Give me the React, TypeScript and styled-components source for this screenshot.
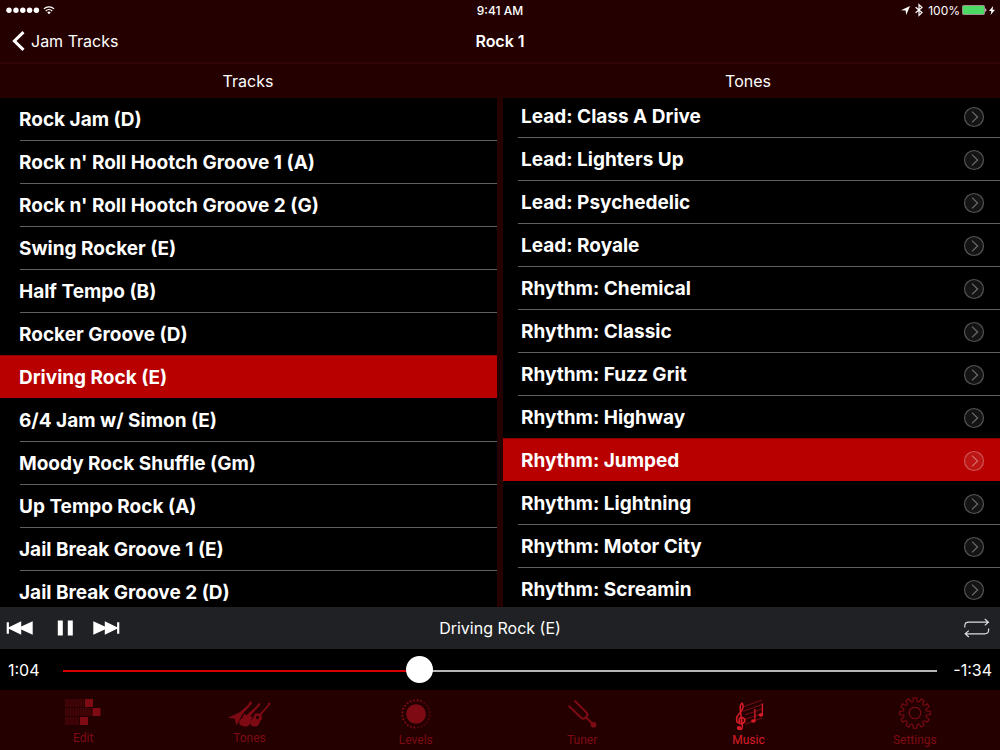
import React, { useState } from "react";
import styled, { createGlobalStyle } from "styled-components";

const Global = createGlobalStyle`
  *, *::before, *::after { box-sizing: border-box; }
  body { margin: 0; background: #000; }
  button { font: inherit; color: inherit; background: none; border: 0; padding: 0; cursor: pointer; }
  svg { display: block; flex: none; overflow: visible; }
`;

const Page = styled.div`
  display: flex;
  flex-direction: column;
  height: 100vh;
  min-height: 420px;
  color: #fff;
  background: #000;
  font-family: Inter, "Liberation Sans", sans-serif;
  font-size: 16px;
`;

const Header = styled.header`
  flex: none;
  background: #250000;
`;

const Split = styled.div`
  display: grid;
  grid-template-columns: 1fr auto 1fr;
  align-items: center;
`;

const StatusBar = styled(Split)`
  height: 20px;
  padding: 0 5px;
  font-size: 12px;
`;

const Cluster = styled.div<{ $end?: boolean; $gap: number }>`
  display: flex;
  align-items: center;
  justify-content: ${(p) => (p.$end ? "flex-end" : "flex-start")};
  gap: ${(p) => p.$gap}px;
`;

const Clock = styled.time`
  font-weight: 500;
`;

const NavBar = styled(Split)`
  height: 44px;
  padding: 0 12px;
  border-bottom: 2px solid #320606;
`;

const BackLink = styled.a`
  display: flex;
  align-items: center;
  gap: 6px;
  color: #fff;
  text-decoration: none;
`;

const Title = styled.h1`
  margin: 0;
  font-size: 16px;
  font-weight: 600;
`;

const Headings = styled.div`
  display: grid;
  grid-template-columns: 1fr 1fr;
  column-gap: 4px;
  height: 34px;
  padding-right: 4px;
  align-items: center;
  text-align: center;
`;

const Heading = styled.h2`
  margin: 0;
  font-size: 16px;
  font-weight: 400;
`;

const Columns = styled.main`
  flex: 1;
  min-height: 0;
  display: grid;
  grid-template-columns: 1fr 1fr;
  column-gap: 6px;
  background: #250000;
`;

const Pane = styled.div`
  overflow: hidden;
  background: #000;
`;

const List = styled.ul<{ $scrolled: number }>`
  list-style: none;
  margin: -${(p) => p.$scrolled}px 0 0;
  padding: 0;
`;

const Row = styled.button<{ $selected: boolean; $line: string; $inset: number; $lineInset: number }>`
  display: flex;
  align-items: center;
  justify-content: space-between;
  width: 100%;
  height: 43px;
  padding: 2px 15px 0 ${(p) => p.$inset}px;
  text-align: left;
  font-size: 19px;
  line-height: 23px;
  font-weight: 700;
  background: linear-gradient(${(p) => p.$line}, ${(p) => p.$line})
    ${(p) => (p.$selected ? 0 : p.$lineInset)}px 0 / 100% 1px no-repeat
    ${(p) => (p.$selected ? "#b80000" : "#000")};
`;

const Player = styled.section`
  flex: none;
  display: grid;
  grid-template-columns: 1fr auto 1fr;
  align-items: center;
  height: 42px;
  padding: 0 10px 0 6px;
  background: #202124;
`;

const IconButton = styled.button`
  display: flex;
`;

const Transport = styled.div`
  display: flex;
  align-items: center;
  gap: 20px;
`;

const NowPlaying = styled.span`
  padding-left: 4px;
`;

const LoopSlot = styled.div`
  display: flex;
  justify-content: flex-end;
`;

const Progress = styled.div`
  flex: none;
  display: flex;
  align-items: center;
  height: 41px;
  padding: 0 8px;
`;

const Time = styled.span<{ $end?: boolean }>`
  width: 55px;
  text-align: ${(p) => (p.$end ? "right" : "left")};
`;

const Seek = styled.input`
  flex: 1;
  min-width: 0;
  height: 27px;
  margin: 0;
  appearance: none;
  background: linear-gradient(90deg, #d80000 var(--played), #b4b4b4 var(--played)) 0 14px / 100% 2px no-repeat;
  &::-webkit-slider-thumb {
    appearance: none;
    width: 27px;
    height: 27px;
    border-radius: 50%;
    background: #fff;
  }
`;

const TabBar = styled.nav`
  flex: none;
  display: grid;
  grid-template-columns: repeat(6, 1fr);
  height: 60px;
  padding-right: 2px;
  background: #250000;
`;

const Tab = styled.a<{ $active: boolean }>`
  display: flex;
  flex-direction: column;
  align-items: center;
  gap: 6px;
  padding-top: 6px;
  color: ${(p) => (p.$active ? "#d91c28" : "#7e0b14")};
  text-decoration: none;
  font-family: Roboto, "Liberation Sans", sans-serif;
  font-size: 12px;
  line-height: 14px;
`;

const tracks = [
  "Rock Jam (D)",
  "Rock n' Roll Hootch Groove 1 (A)",
  "Rock n' Roll Hootch Groove 2 (G)",
  "Swing Rocker (E)",
  "Half Tempo (B)",
  "Rocker Groove (D)",
  "Driving Rock (E)",
  "6/4 Jam w/ Simon (E)",
  "Moody Rock Shuffle (Gm)",
  "Up Tempo Rock (A)",
  "Jail Break Groove 1 (E)",
  "Jail Break Groove 2 (D)",
];

const tones = [
  "Lead: Class A Drive",
  "Lead: Lighters Up",
  "Lead: Psychedelic",
  "Lead: Royale",
  "Rhythm: Chemical",
  "Rhythm: Classic",
  "Rhythm: Fuzz Grit",
  "Rhythm: Highway",
  "Rhythm: Jumped",
  "Rhythm: Lightning",
  "Rhythm: Motor City",
  "Rhythm: Screamin",
];

const Disclosure = () => (
  <svg width="22" height="22" viewBox="0 0 22 22" fill="none" stroke="#fff" aria-hidden="true">
    <circle cx="11" cy="11" r="9.5" fill="#fff" fillOpacity="0.08" strokeOpacity="0.3" strokeWidth="1.2" />
    <path d="M9 5.6 14.6 11 9 16.4" strokeOpacity="0.36" strokeWidth="1.3" />
  </svg>
);

const Signal = () => (
  <svg width="34" height="8" viewBox="0 0 34 8" fill="#fff" aria-hidden="true">
    {[4, 11, 17.8, 24.6, 31.4].map((x) => (
      <circle key={x} cx={x} cy="4.3" r="2.7" />
    ))}
  </svg>
);

const Wifi = () => (
  <svg width="12" height="10" viewBox="0 0 13 10" fill="none" stroke="#fff" strokeWidth="1.4" aria-hidden="true">
    <path d="M1 3.8a7.8 7.8 0 0 1 11 0M3 6a5 5 0 0 1 7 0" />
    <path d="M4.6 7.6a2.7 2.7 0 0 1 3.8 0L6.5 9.6Z" fill="#fff" stroke="none" />
  </svg>
);

const Location = () => (
  <svg width="9" height="9" viewBox="0 0 9 9" fill="#fff" aria-hidden="true">
    <path d="M9 0 5.2 9 4.6 4.5 0 4.2Z" />
  </svg>
);

const Bluetooth = () => (
  <svg width="8" height="12" viewBox="0 0 8 12" fill="none" stroke="#fff" strokeWidth="1.2" aria-hidden="true">
    <path d="M.6 3.2 7 8.6 4 11.3V.7L7 3.4.6 8.8" />
  </svg>
);

const Battery = () => (
  <svg width="25" height="10" viewBox="0 0 25 10" aria-hidden="true">
    <rect x=".5" y=".5" width="22" height="9" rx="1" fill="#4cd964" stroke="#a08f8f" />
    <path d="M23.2 3.2c1.6.3 1.6 3.3 0 3.6Z" fill="#e0d8d8" />
  </svg>
);

const Bolt = () => (
  <svg width="6" height="9" viewBox="0 0 6 9" fill="#fff" aria-hidden="true">
    <path d="M4.2 0 0 5H2.4L1.6 9 6 3.8H3.5Z" />
  </svg>
);

const Chevron = () => (
  <svg width="13" height="20" viewBox="0 0 13 20" fill="none" stroke="#fff" strokeWidth="3" aria-hidden="true">
    <path d="M11.5 1.2 2.4 10l9.1 8.8" />
  </svg>
);

const Skip = ({ forward }: { forward?: boolean }) => (
  <svg width="27" height="14" viewBox="0 0 27 14" fill="#fff" aria-hidden="true">
    <g transform={forward ? "matrix(-1 0 0 1 27 0)" : undefined}>
      <path d="M.7 1.2h2.2v5.1L15.2.2v5.4L26.7.2v13.6L15.2 8.4v5.4L2.9 7.7v5.1H.7Z" />
    </g>
  </svg>
);

const Pause = () => (
  <svg width="20" height="16" viewBox="-4 0 20 16" fill="#fff" aria-hidden="true">
    <path d="M.8.5h5v15h-5ZM10.8.5h5v15h-5Z" />
  </svg>
);

const Loop = () => (
  <svg width="26" height="20" viewBox="0 0 26 20" fill="none" stroke="#ddd" strokeWidth="1.2" aria-hidden="true">
    <path d="M.8 9.5V8q0-3.8 4-3.8H24M20.8 1l3.6 3.2-3.6 3.2" />
    <path d="M24.6 10.5V12q0 3.8-4 3.8H2M4.8 12.6 1.2 15.8 4.8 19" />
  </svg>
);

const EditIcon = () => (
  <svg width="36" height="29" viewBox="0 0 36 29" fill="currentColor" aria-hidden="true">
    {[
      [3, 20],
      [12, 27.5],
      [21, 15],
    ].map(([y, end]) => (
      <g key={y}>
        <rect x="0" y={y} width={end - 1} height="8" fillOpacity="0.34" />
        {Array.from({ length: Math.floor(end / 2.5) }, (_, i) => (
          <rect key={i} x={i * 2.5 + 1.6} y={y} width="0.8" height="8" fill="#250000" fillOpacity="0.6" />
        ))}
        <rect x={end} y={y} width="8" height="8" />
      </g>
    ))}
  </svg>
);

const GuitarsIcon = () => (
  <svg width="43" height="29" viewBox="0 -3 43 29" fill="currentColor" aria-hidden="true">
    <path d="M0 18.8 11.5 13.6 20.6 5.2 21.4 3 23.4 2.4 24 4 22.7 6 14.2 15.6 8.4 26.4 6.8 19.8Z" />
    <path d="M11.2 22.6c.3-2.6 2.2-2.2 3.1-3.300.8-1.200.1-3.800 2.500-4l1.700 1L28.900 6.800 29.700 5l2.100-.9.700 1.400-1.800 1.900-8.700 10.200 2.300-.2c.6 2-1.500 2.900-1.700 4.200.1 1.900-.8 5.700-5.200 5.900-4 .2-6.500-1.900-6.200-4.900Z" />
    <path fillRule="evenodd" d="M22.300 23c.3-2.600 2.200-2.700 3-3.900.8-1.300.1-4.200 3.200-4.800 1.200-.2 2.300.1 3 .7l8-8.800.5-1.900 1.900-.7.7 1.400-1.500 1.700-8 9.600c1.800 2 .8 4.200-.5 5.200-1.200.9-.7 5.800-5.500 6.100-3.400.1-5.200-1.900-4.800-4.600ZM29.500 16.800a1.700 1.700 0 1 0 .1 0Z" />
  </svg>
);

const LevelsIcon = () => (
  <svg width="30" height="31" viewBox="0 -1 30 31" fill="currentColor" aria-hidden="true">
    <circle cx="15" cy="17" r="9.800" />
    {Array.from({ length: 24 }, (_, i) => {
      const a = ((i * 15 + 97) * Math.PI) / 180;
      return (
        <circle
          key={i}
          cx={15 + 13.7 * Math.cos(a)}
          cy={17 + 13.7 * Math.sin(a)}
          r="1.05"
          fillOpacity={i < 14 ? 1 : 0.5}
        />
      );
    })}
  </svg>
);

const TunerIcon = () => (
  <svg width="30" height="31" viewBox="0 0 30 31" fill="none" stroke="currentColor" strokeWidth="2" strokeLinecap="round" aria-hidden="true">
    <path d="M8 5 19.600 16.600Q21.400 18.600 19.600 20.400L18.200 21.800Q16.200 23.600 14.200 21.800L2.200 10.200M19.400 21.800 26 28.500" />
    <circle cx="26.500" cy="28.800" r="2.200" fill="currentColor" stroke="none" />
    <circle cx="26.500" cy="28.800" r="2.800" fill="currentColor" stroke="none" />
  </svg>
);

const MusicIcon = () => (
  <svg width="30" height="31" viewBox="0 0 30 31" fill="none" stroke="currentColor" aria-hidden="true">
    <path
      d="M11 10.500 29 4M10 15.300 29 8.500M12 19 29 13M3 26.500 29 17.500M12 28.300 29 22"
      strokeOpacity="0.45"
      strokeWidth="1"
    />
    <path
      d="M6 32.800C8.400 34.200 9.700 32.600 9.300 30.200L7.200 13C6.900 9.500 8.200 7.200 9.300 7.300 11 9.800 10 13.300 6.700 17 2.600 20.800 2.200 26.400 7 27.600 11.400 28.200 13.200 24.500 11 22.300 8.600 20.500 5.600 22 6 24.300 6.200 25.200 6.800 25.800 7.600 26"
      strokeWidth="1.500"
    />
    <ellipse cx="6" cy="32" rx="2.200" ry="1.900" fill="currentColor" stroke="none" />
    <path d="M21.900 25V13M29.400 19V7.500" strokeWidth="1.300" />
    <ellipse cx="20.300" cy="25" rx="2.200" ry="1.700" fill="currentColor" stroke="none" />
    <ellipse cx="27.800" cy="19" rx="2.200" ry="1.700" fill="currentColor" stroke="none" />
  </svg>
);

const gearPath = (() => {
  const at = (deg: number, r: number) => {
    const a = (deg * Math.PI) / 180;
    return `${(16 + r * Math.sin(a)).toFixed(2)} ${(17 - r * Math.cos(a)).toFixed(2)}`;
  };
  const parts: string[] = [];
  for (let i = 0; i < 12; i++) {
    const c = i * 30;
    parts.push(`${i ? "L" : "M"}${at(c - 6.5, 15.4)}L${at(c + 6.5, 15.4)}L${at(c + 8, 13)}`);
    parts.push(`Q${at(c + 15, 10)} ${at(c + 22, 13)}`);
  }
  return `${parts.join("")}Z`;
})();

const SettingsIcon = () => (
  <svg width="32" height="31" viewBox="0 0 32 31" fill="none" stroke="currentColor" strokeWidth="1.1" strokeLinejoin="round" aria-hidden="true">
    <path d={gearPath} />
    <circle cx="16" cy="17" r="5.8" />
  </svg>
);

const tabs = [
  { label: "Edit", icon: <EditIcon /> },
  { label: "Tones", icon: <GuitarsIcon /> },
  { label: "Levels", icon: <LevelsIcon /> },
  { label: "Tuner", icon: <TunerIcon /> },
  { label: "Music", icon: <MusicIcon /> },
  { label: "Settings", icon: <SettingsIcon /> },
];

const formatTime = (s: number) => `${Math.floor(s / 60)}:${String(s % 60).padStart(2, "0")}`;

type PickerProps = {
  items: string[];
  selected: number;
  onSelect: (index: number) => void;
  scrolled: number;
  inset: number;
  lineInset: number;
  disclosure?: boolean;
};

const Picker = ({ items, selected, onSelect, scrolled, inset, lineInset, disclosure }: PickerProps) => (
  <Pane>
    <List $scrolled={scrolled}>
      {items.map((item, i) => (
        <li key={item}>
          <Row
            type="button"
            aria-pressed={i === selected}
            $selected={i === selected}
            $inset={inset}
            $lineInset={lineInset}
            $line={i === selected ? "#8a0000" : i === selected + 1 ? "#000" : "#606060"}
            onClick={() => onSelect(i)}
          >
            {item}
            {disclosure && <Disclosure />}
          </Row>
        </li>
      ))}
    </List>
  </Pane>
);

export default function App() {
  const [track, setTrack] = useState(6);
  const [tone, setTone] = useState(8);
  const [elapsed, setElapsed] = useState(64);
  const duration = 158;

  return (
    <Page>
      <Global />
      <Header>
        <StatusBar>
          <Cluster $gap={4}>
            <Signal />
            <Wifi />
          </Cluster>
          <Clock>9:41 AM</Clock>
          <Cluster $end $gap={5}>
            <Location />
            <Bluetooth />
            <Cluster $gap={2}>
              100%
              <Battery />
              <Bolt />
            </Cluster>
          </Cluster>
        </StatusBar>
        <NavBar>
          <Cluster $gap={0}>
            <BackLink href="#jam-tracks">
              <Chevron />
              Jam Tracks
            </BackLink>
          </Cluster>
          <Title>Rock 1</Title>
        </NavBar>
        <Headings>
          <Heading>Tracks</Heading>
          <Heading>Tones</Heading>
        </Headings>
      </Header>
      <Columns>
        <Picker items={tracks} selected={track} onSelect={setTrack} scrolled={1} inset={19} lineInset={20} />
        <Picker items={tones} selected={tone} onSelect={setTone} scrolled={4} inset={18} lineInset={15} disclosure />
      </Columns>
      <Player aria-label="Player">
        <Transport>
          <IconButton type="button" aria-label="Previous">
            <Skip />
          </IconButton>
          <IconButton type="button" aria-label="Pause">
            <Pause />
          </IconButton>
          <IconButton type="button" aria-label="Next">
            <Skip forward />
          </IconButton>
        </Transport>
        <NowPlaying>{tracks[track]}</NowPlaying>
        <LoopSlot>
          <IconButton type="button" aria-label="Repeat">
            <Loop />
          </IconButton>
        </LoopSlot>
      </Player>
      <Progress>
        <Time>{formatTime(elapsed)}</Time>
        <Seek
          type="range"
          aria-label="Position"
          min={0}
          max={duration}
          value={elapsed}
          onChange={(e) => setElapsed(Number(e.target.value))}
          style={{ "--played": `${(elapsed / duration) * 100}%` } as React.CSSProperties}
        />
        <Time $end>-{formatTime(duration - elapsed)}</Time>
      </Progress>
      <TabBar aria-label="Sections">
        {tabs.map(({ label, icon }) => (
          <Tab key={label} href={`#${label.toLowerCase()}`} $active={label === "Music"}>
            {icon}
            {label}
          </Tab>
        ))}
      </TabBar>
    </Page>
  );
}
